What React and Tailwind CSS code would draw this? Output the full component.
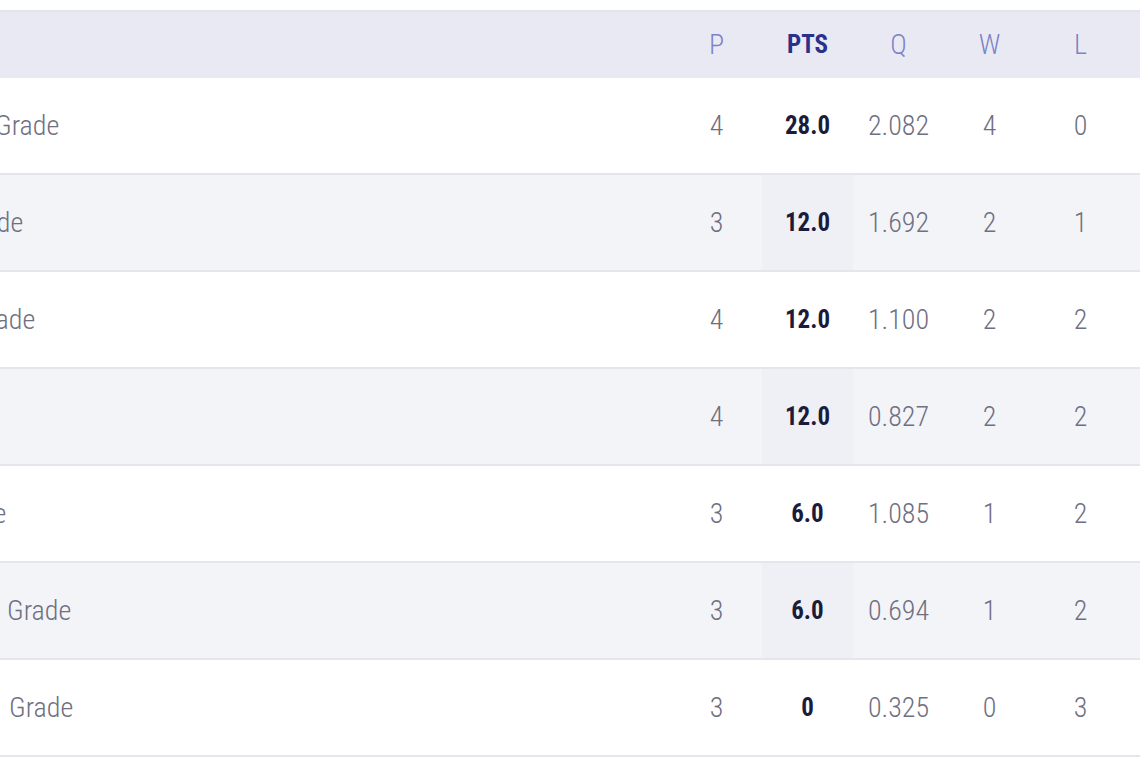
const rows = [
  { shift: "ml-[-5px]", p: 4, pts: "28.0", q: "2.082", w: 4, l: 0 },
  { shift: "ml-[-41px]", p: 3, pts: "12.0", q: "1.692", w: 2, l: 1 },
  { shift: "ml-[-29px]", p: 4, pts: "12.0", q: "1.100", w: 2, l: 2 },
  { shift: "ml-[-90px]", p: 4, pts: "12.0", q: "0.827", w: 2, l: 2 },
  { shift: "ml-[-58px]", p: 3, pts: "6.0", q: "1.085", w: 1, l: 2 },
  { shift: "ml-[7px]", p: 3, pts: "6.0", q: "0.694", w: 1, l: 2 },
  { shift: "ml-[9px]", p: 3, pts: "0", q: "0.325", w: 0, l: 3 },
];

const font = {
  fontFamily:
    '"Roboto Condensed", "Liberation Sans Narrow", "DejaVu Sans Condensed", "Liberation Sans", sans-serif',
};

export default function App() {
  return (
    <div className="w-[1140px] h-[760px] bg-white overflow-hidden pt-[10px]" style={font}>
      {/* header */}
      <div className="flex h-[68px] border-t-2 border-[#e3e3ea] bg-[#e9e9f4] text-[28px] font-light">
        <div className="flex-1" />
        <div className="w-[91px] flex items-center justify-center text-[#7d83c6]">P</div>
        <div className="w-[91px] flex items-center justify-center font-bold text-[25px] text-[#29318a]">PTS</div>
        <div className="w-[91px] flex items-center justify-center text-[#7d83c6]">Q</div>
        <div className="w-[91px] flex items-center justify-center text-[#7d83c6]">W</div>
        <div className="w-[91px] flex items-center justify-center text-[#7d83c6]">L</div>
        <div className="w-[14px]" />
      </div>

      {rows.map((r, i) => {
        const even = i % 2 === 1;
        return (
          <div
            key={i}
            className={
              "flex h-[97px] border-b-2 border-[#e5e6ec] text-[28px] font-light text-[#6f6f82] " +
              (even ? "bg-[#f3f4f8]" : "bg-white")
            }
          >
            <div className="flex-1 flex items-center overflow-hidden">
              <span className={"whitespace-nowrap " + r.shift}>Grade</span>
            </div>
            <div className="w-[91px] flex items-center justify-center">{r.p}</div>
            <div
              className={
                "w-[91px] flex items-center justify-center font-bold text-[25px] text-[#1c1b3a] " +
                (even ? "bg-[#eef0f6]" : "")
              }
            >
              {r.pts}
            </div>
            <div className="w-[91px] flex items-center justify-center">{r.q}</div>
            <div className="w-[91px] flex items-center justify-center">{r.w}</div>
            <div className="w-[91px] flex items-center justify-center">{r.l}</div>
            <div className="w-[14px]" />
          </div>
        );
      })}
    </div>
  );
}
